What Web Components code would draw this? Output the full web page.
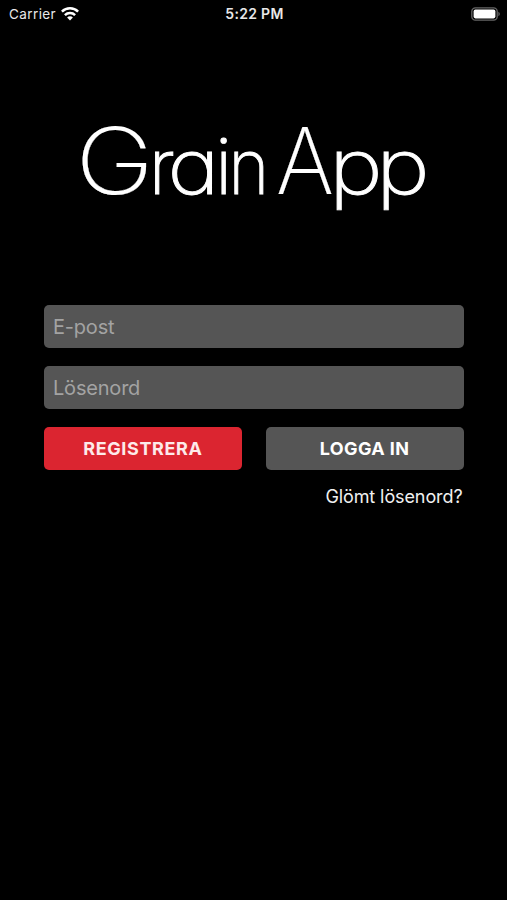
<!DOCTYPE html>
<html lang="sv">
<head>
<meta charset="utf-8">
<meta name="viewport" content="width=device-width, initial-scale=1">
<title>Grain App</title>
<style>
    html, body {
        margin: 0;
        height: 100%;
        background: #000;
    }
    body {
        overflow: hidden;
        color: #fff;
        font-family: Inter, "Liberation Sans", sans-serif;
    }
</style>
</head>
<body>
<login-screen></login-screen>
<script>
class StatusBar extends HTMLElement {
    connectedCallback() {
        this.attachShadow({ mode: 'open' });
        this.shadowRoot.innerHTML = `
            <style>
                :host {
                    display: grid;
                    grid-template-columns: 1fr auto 1fr;
                    align-items: center;
                    height: 27px;
                    padding: 0 7px 0 9px;
                    font-size: 13.5px;
                    color: #e8e8e8;
                }
                .left {
                    display: flex;
                    align-items: center;
                    gap: 5px;
                    letter-spacing: 0.4px;
                }
                .time {
                    font-size: 14px;
                    font-weight: 600;
                    letter-spacing: 0.3px;
                }
                .battery {
                    justify-self: end;
                }
                svg {
                    display: block;
                }
            </style>
            <div class="left">
                <span><slot name="carrier"></slot></span>
                <svg width="18" height="14" viewBox="0 0 18 14" fill="none" stroke="#fff" stroke-width="2.5">
                    <path d="M0.9 4.7C5.4 0.2 12.6 0.2 17.1 4.7"/>
                    <path d="M3.9 8.1C6.7 5.3 11.3 5.3 14.1 8.1"/>
                    <path d="M9 13.5L6.1 10.5C7.7 8.9 10.3 8.9 11.9 10.5Z" fill="#fff" stroke="none"/>
                </svg>
            </div>
            <span class="time"><slot name="time"></slot></span>
            <svg class="battery" width="29" height="14" viewBox="0 0 29 14">
                <rect x="0.8" y="0.8" width="25.4" height="12.4" rx="3.6" fill="none" stroke="#666" stroke-width="1.3"/>
                <rect x="2.6" y="2.6" width="21.8" height="8.8" rx="1.8" fill="#fff"/>
                <path d="M27.4 4.8C29.2 5.6 29.2 8.4 27.4 9.2Z" fill="#666"/>
            </svg>
        `;
    }
}

class BrandLogo extends HTMLElement {
    connectedCallback() {
        this.attachShadow({ mode: 'open' });
        this.shadowRoot.innerHTML = `
            <style>
                :host {
                    display: block;
                }
                svg {
                    display: block;
                }
                text {
                    fill: #fff;
                    stroke: #fff;
                    stroke-width: 0.9px;
                    font-size: 77px;
                    font-weight: 200;
                    font-feature-settings: "cv11";
                }
                .cap {
                    font-size: 92px;
                    stroke-width: 0.2px;
                }
            </style>
            <svg width="507" height="120" viewBox="0 100 507 120">
                <text y="194"><tspan class="cap" x="75.5" data-stretch="1.15">G</tspan><tspan x="148.5">r</tspan><tspan x="167.5" data-stretch="1.14">a</tspan><tspan x="215">i</tspan><tspan x="228.5" data-stretch="0.9">n</tspan> <tspan class="cap" x="276" data-stretch="0.96">A</tspan><tspan x="329" data-stretch="1.18">p</tspan><tspan x="376" data-stretch="1.18">p</tspan></text>
            </svg>
        `;

        this.shadowRoot.querySelectorAll('[data-stretch]').forEach((letter) => {
            const length = letter.getComputedTextLength() * letter.dataset.stretch;
            letter.setAttribute('textLength', length);
            letter.setAttribute('lengthAdjust', 'spacingAndGlyphs');
        });
    }
}

class TextField extends HTMLElement {
    connectedCallback() {
        this.attachShadow({ mode: 'open' });
        this.shadowRoot.innerHTML = `
            <style>
                :host {
                    display: flex;
                    align-items: center;
                    box-sizing: border-box;
                    height: 43px;
                    padding: 0 9px;
                    border-radius: 5px;
                    background: #555;
                    color: #a3a3a3;
                    font-size: 20px;
                    letter-spacing: -0.2px;
                    cursor: text;
                }
            </style>
            <span><slot></slot></span>
        `;
    }
}

class ActionButton extends HTMLElement {
    connectedCallback() {
        this.attachShadow({ mode: 'open' });
        this.shadowRoot.innerHTML = `
            <style>
                :host {
                    display: block;
                    flex: 1;
                }
                button {
                    display: block;
                    width: 100%;
                    height: 43px;
                    padding: 0;
                    border: none;
                    border-radius: 5px;
                    background: #555;
                    color: #fff;
                    font: inherit;
                    font-size: 18px;
                    font-weight: 700;
                    letter-spacing: 0.4px;
                    cursor: pointer;
                }
                :host([primary]) button {
                    background: #db2530;
                    color: #fdeaea;
                    letter-spacing: 0.6px;
                }
            </style>
            <button><slot></slot></button>
        `;
    }
}

class LoginScreen extends HTMLElement {
    connectedCallback() {
        this.attachShadow({ mode: 'open' });
        this.shadowRoot.innerHTML = `
            <style>
                :host {
                    display: block;
                }
                brand-logo {
                    margin-top: 73px;
                }
                form {
                    display: flex;
                    flex-direction: column;
                    gap: 18px;
                    margin: 85px 43.5px 0 44px;
                }
                .actions {
                    display: flex;
                    gap: 24px;
                }
                .forgot {
                    align-self: flex-end;
                    margin: -2px 1px 0 0;
                    color: #f0f0f0;
                    font-size: 18px;
                    line-height: 22px;
                    letter-spacing: -0.1px;
                    text-decoration: none;
                }
            </style>
            <status-bar>
                <span slot="carrier">Carrier</span>
                <span slot="time">5:22 PM</span>
            </status-bar>
            <brand-logo></brand-logo>
            <form>
                <text-field>E-post</text-field>
                <text-field>Lösenord</text-field>
                <div class="actions">
                    <action-button primary>REGISTRERA</action-button>
                    <action-button>LOGGA IN</action-button>
                </div>
                <a class="forgot" href="#">Glömt lösenord?</a>
            </form>
        `;
    }
}

customElements.define('status-bar', StatusBar);
customElements.define('brand-logo', BrandLogo);
customElements.define('text-field', TextField);
customElements.define('action-button', ActionButton);
customElements.define('login-screen', LoginScreen);
</script>
</body>
</html>
